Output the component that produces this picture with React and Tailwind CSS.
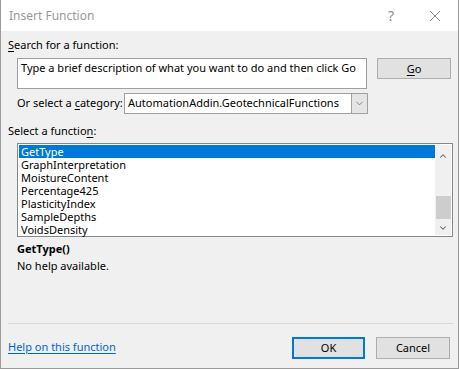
import { ChevronDown, ChevronUp } from 'lucide-react'

const font = { fontFamily: '"Segoe UI", "Noto Sans", sans-serif' }

const functions = [
  'GetType',
  'GraphInterpretation',
  'MoistureContent',
  'Percentage425',
  'PlasticityIndex',
  'SampleDepths',
  'VoidsDensity',
]

export default function App() {
  return (
    <div
      className="w-[459px] h-[369px] bg-[#f0f0f0] flex flex-col border-x border-b border-[#9a9a9a] text-[11px] text-black overflow-hidden whitespace-nowrap"
      style={font}
    >
      {/* Title bar */}
      <div className="h-[31px] bg-white flex items-center pl-[8px] shrink-0">
        <span className="text-[#999999] text-[12px]">Insert Function</span>
        <span className="ml-auto text-[#8a8a8a] text-[14px] mr-[35px]">?</span>
        <svg width="12" height="12" viewBox="0 0 12 12" className="mr-[17px]">
          <path d="M1 1 L11 11 M11 1 L1 11" stroke="#8a8a8a" strokeWidth="1" />
        </svg>
      </div>

      {/* Body */}
      <div className="flex-1 flex flex-col px-[7px]">
        <div className="h-[16px] leading-[16px] mt-[6px] shrink-0">
          <span className="underline underline-offset-2">S</span>earch for a function:
        </div>

        <div className="flex mt-[5px] ml-[9px] shrink-0">
          <div className="w-[351px] h-[31px] bg-white border border-[#a0a0a0] px-[3px] pt-[1px] leading-[16px]">
            Type a brief description of what you want to do and then click Go
          </div>
          <button className="ml-[10px] w-[74px] h-[21px] bg-[#e1e1e1] border border-[#adadad] leading-[18px]">
            <span className="underline underline-offset-2">G</span>o
          </button>
        </div>

        <div className="flex items-center mt-[4px] ml-[9px] shrink-0">
          <span className="w-[107px]">
            Or select a <span className="underline underline-offset-2">c</span>ategory:
          </span>
          <div className="w-[244px] h-[21px] bg-white border border-[#a0a0a0] flex items-center">
            <span className="pl-[3px] flex-1">AutomationAddin.GeotechnicalFunctions</span>
            <div className="w-[16px] h-[19px] bg-[#e5e5e5] border-l border-[#a0a0a0] flex items-center justify-center">
              <ChevronDown size={11} strokeWidth={1.5} color="#606060" />
            </div>
          </div>
        </div>

        <div className="h-[16px] leading-[16px] mt-[9px] shrink-0">
          Select a functio<span className="underline underline-offset-2">n</span>:
        </div>

        <div className="ml-[9px] mt-[4px] w-[436px] h-[94px] bg-white border border-[#828790] flex p-[1px] shrink-0">
          <div className="flex-1 flex flex-col">
            {functions.map((f, i) => (
              <div
                key={f}
                className={`h-[13px] leading-[13px] pl-[2px] ${i === 0 ? 'bg-[#0078d7] text-white' : ''}`}
              >
                {f}
              </div>
            ))}
          </div>
          <div className="w-[16px] bg-[#f0f0f0] flex flex-col items-center">
            <ChevronUp size={10} strokeWidth={2.5} color="#606060" className="mt-[6px]" />
            <div className="w-[15px] h-[23px] bg-[#cdcdcd] mt-[35px]" />
            <ChevronDown size={10} strokeWidth={2.5} color="#606060" className="mt-[4px]" />
          </div>
        </div>

        <div className="ml-[9px] mt-[4px] font-bold h-[16px] leading-[16px] shrink-0">GetType()</div>
        <div className="ml-[9px] mt-[1px] h-[16px] leading-[16px] shrink-0">No help available.</div>

        <div className="mt-[49px] h-px bg-[#d9d9d9] w-[445px] shrink-0" />

        <div className="flex items-center mt-[13px] shrink-0">
          <a className="text-[#0066cc] underline underline-offset-2 -mt-[2px]">Help on this function</a>
          <button className="ml-auto w-[73px] h-[22px] bg-[#e1e1e1] border-2 border-[#0078d7]">OK</button>
          <button className="ml-[11px] w-[74px] h-[22px] bg-[#e1e1e1] border border-[#adadad] mr-[1px]">Cancel</button>
        </div>
      </div>
    </div>
  )
}
